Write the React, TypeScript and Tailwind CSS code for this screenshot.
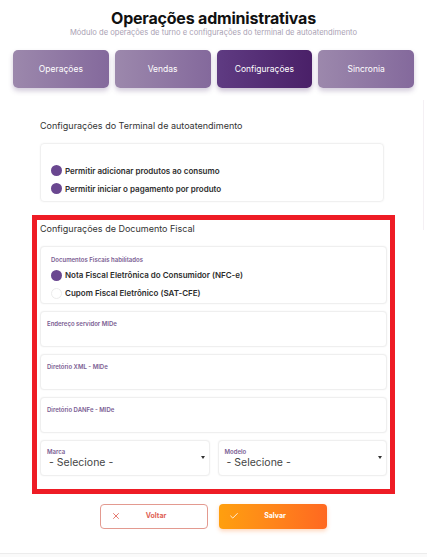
import { Check, X } from "lucide-react";

const tabs = [
  { name: "Operações", current: false },
  { name: "Vendas", current: false },
  { name: "Configurações", current: true },
  { name: "Sincronia", current: false },
];

const Radio = ({ checked, label }: { checked: boolean; label: string }) => (
  <div className="flex items-center gap-[3px]">
    <span
      className={
        checked
          ? "h-[11px] w-[11px] rounded-full bg-[#6a4790]"
          : "h-[11px] w-[11px] rounded-full border border-[#ececec] bg-white"
      }
    />
    <span className="text-[8px] font-semibold text-[#2d2d2d]">{label}</span>
  </div>
);

const Field = ({ label }: { label: string }) => (
  <div className="h-[36px] rounded-[4px] border border-[#efefef] bg-white px-[6px] pt-[7px] shadow-[0_0_2px_rgba(0,0,0,0.06)]">
    <div className="text-[6px] font-semibold text-[#7a5d92]">{label}</div>
  </div>
);

const SelectField = ({ label }: { label: string }) => (
  <div className="relative h-[36px] flex-1 rounded-[4px] border border-[#efefef] bg-white px-[6px] pt-[7px] shadow-[0_0_2px_rgba(0,0,0,0.06)]">
    <div className="text-[6px] font-semibold leading-[7px] text-[#7a5d92]">{label}</div>
    <div className="mt-[1px] pl-[2px] text-[10.5px] leading-[13px] text-[#444]">- Selecione -</div>
    <span className="absolute right-[4px] top-[15px] h-0 w-0 border-x-[2px] border-t-[3px] border-x-transparent border-t-[#333]" />
  </div>
);

export default function App() {
  return (
    <div className="relative h-[557px] w-[427px] overflow-hidden bg-white font-['Inter',sans-serif]">
      <div className="flex flex-col items-center pt-[8px]">
        <h1 className="text-[16px] font-bold leading-[20px] tracking-[-0.2px] text-[#111]">
          Operações administrativas
        </h1>
        <p className="text-[7.6px] leading-[9px] text-[#aaa2b4]">
          Módulo de operações de turno e configurações do terminal de autoatendimento
        </p>
      </div>

      <div className="mt-[13px] flex gap-[6px] px-[13px]">
        {tabs.map((t) => (
          <div
            key={t.name}
            className={
              t.current
                ? "flex h-[38px] w-[96px] items-center justify-center rounded-[5px] bg-gradient-to-r from-[#5f3b82] to-[#4a2068] text-[8.5px] text-white shadow-[0_3px_5px_rgba(80,50,110,0.3)]"
                : "flex h-[38px] w-[96px] items-center justify-center rounded-[5px] bg-gradient-to-r from-[#9c88ac] to-[#84699c] text-[8.5px] text-white shadow-[0_3px_5px_rgba(80,50,110,0.25)]"
            }
          >
            {t.name}
          </div>
        ))}
      </div>

      <div className="px-[40px] pt-[31px]">
        <div className="text-[9px] text-[#333]">Configurações do Terminal de autoatendimento</div>
        <div className="mt-[10px] flex h-[59px] w-[344px] flex-col justify-end gap-[6px] rounded-[4px] border border-[#f0f0f0] pb-[6px] pl-[10px] shadow-[0_0_2px_rgba(0,0,0,0.05)]">
          <Radio checked label="Permitir adicionar produtos ao consumo" />
          <Radio checked label="Permitir iniciar o pagamento por produto" />
        </div>
      </div>

      <div className="ml-[32px] mt-[13px] h-[279px] w-[363px] border-[5px] border-[#ee1c25] px-[3px] pt-[2px]">
        <div className="text-[9px] text-[#333]">Configurações de Documento Fiscal</div>
        <div className="mt-[11px] flex flex-col">
          <div className="h-[58px] rounded-[4px] border border-[#efefef] bg-white px-[10px] pt-[8px] shadow-[0_0_2px_rgba(0,0,0,0.06)]">
            <div className="text-[6px] font-semibold text-[#7a5d92]">Documentos Fiscais habilitados</div>
            <div className="mt-[5px] flex flex-col gap-[6px]">
              <Radio checked label="Nota Fiscal Eletrônica do Consumidor (NFC-e)" />
              <Radio checked={false} label="Cupom Fiscal Eletrônico (SAT-CFE)" />
            </div>
          </div>
          <div className="mt-[7px] flex flex-col gap-[7px]">
            <Field label="Endereço servidor MIDe" />
            <Field label="Diretório XML - MIDe" />
            <Field label="Diretório DANFe - MIDe" />
            <div className="flex gap-[8px]">
              <SelectField label="Marca" />
              <SelectField label="Modelo" />
            </div>
          </div>
        </div>
      </div>

      <div className="mt-[10px] flex justify-center gap-[11px]">
        <button className="flex h-[25px] w-[108px] items-center rounded-[4px] border border-[#e39a90] px-[10px] text-[7px] font-bold text-[#e06155]">
          <X className="h-[10px] w-[10px]" strokeWidth={2} />
          <span className="flex-1 text-center pr-[6px]">Voltar</span>
        </button>
        <button className="flex h-[25px] w-[108px] items-center rounded-[4px] bg-gradient-to-r from-[#ff9f0e] to-[#ff6820] px-[10px] text-[7px] font-bold text-white shadow-[0_2px_4px_rgba(255,120,30,0.3)]">
          <Check className="h-[10px] w-[10px]" strokeWidth={2} />
          <span className="flex-1 text-center pr-[6px]">Salvar</span>
        </button>
      </div>

      <div className="absolute bottom-0 left-0 h-[4px] w-full border-t border-[#ececec] bg-[#fafafa]" />
      <div className="absolute right-[3px] top-[100px] h-[130px] w-px bg-[#f4f0f4]" />
    </div>
  );
}
